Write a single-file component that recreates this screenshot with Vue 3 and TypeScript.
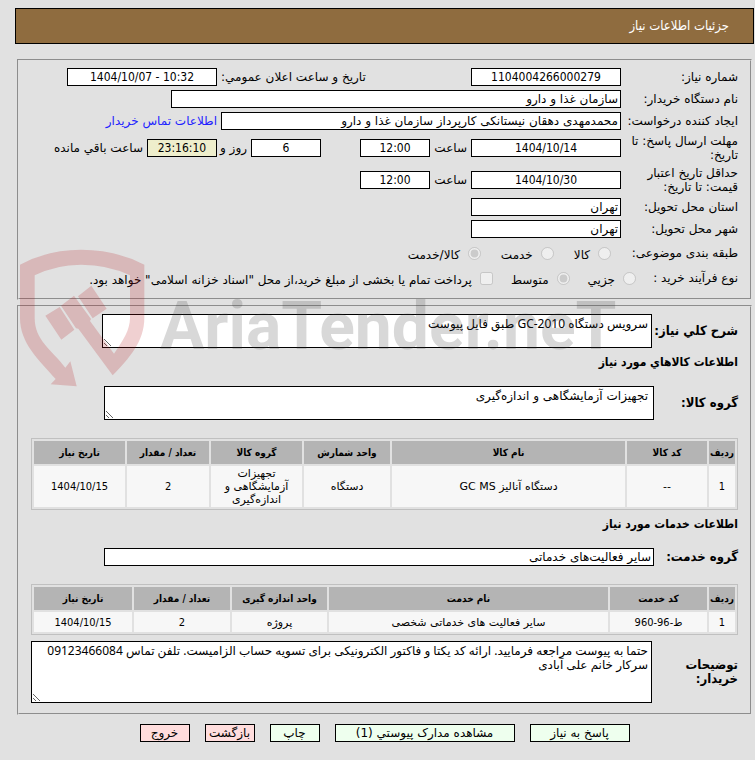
<script setup lang="ts">
interface Column {
  title: string
  width: number
}

interface ItemTable {
  columns: Column[]
  rows: string[][]
}

const goods: ItemTable = {
  columns: [
    { title: 'ردیف', width: 26 },
    { title: 'کد کالا', width: 80 },
    { title: 'نام کالا', width: 233 },
    { title: 'واحد شمارش', width: 86 },
    { title: 'گروه کالا', width: 91 },
    { title: 'تعداد / مقدار', width: 82 },
    { title: 'تاریخ نیاز', width: 91 },
  ],
  rows: [['1', '--', 'دستگاه آنالیز GC MS', 'دستگاه', 'تجهیزات آزمایشگاهی و اندازه‌گیری', '2', '1404/10/15']],
}

const services: ItemTable = {
  columns: [
    { title: 'ردیف', width: 26 },
    { title: 'کد خدمت', width: 97 },
    { title: 'نام خدمت', width: 279 },
    { title: 'واحد اندازه گیری', width: 95 },
    { title: 'تعداد / مقدار', width: 96 },
    { title: 'تاریخ نیاز', width: 98 },
  ],
  rows: [['1', 'ط-96-960', 'سایر فعالیت های خدماتی شخصی', 'پروژه', '2', '1404/10/15']],
}

const total = (t: ItemTable): number => t.columns.reduce((sum, c) => sum + c.width, 0)
const share = (t: ItemTable, c: Column): string => `${(c.width / total(t)) * 100}%`
const isNumeric = (cell: string): boolean => /\d/.test(cell)

const summary = 'سرویس دستگاه GC-2010 طبق فایل پیوست'
const goodsGroup = 'تجهیزات آزمایشگاهی و اندازه‌گیری'
const notes =
  'حتما به پیوست مراجعه فرمایید. ارائه کد یکتا و فاکتور الکترونیکی برای تسویه حساب الزامیست. تلفن تماس 09123466084\nسرکار خانم علی آبادی'
</script>

<template>
  <main class="page" dir="rtl">
    <h1 class="title">جزئیات اطلاعات نیاز</h1>

    <fieldset class="panel details">
      <div class="row">
        <label for="number">شماره نیاز:</label>
        <div class="main">
          <input id="number" class="box wide" value="1104004266000279" readonly />
          <label class="push" for="announced">تاریخ و ساعت اعلان عمومي:</label>
        </div>
        <div class="side"><input id="announced" class="box wide" value="1404/10/07 - 10:32" readonly dir="ltr" /></div>
      </div>
      <div class="row">
        <label for="org">نام دستگاه خریدار:</label>
        <div class="span inset"><input id="org" class="box text full" value="سازمان غذا و دارو" readonly /></div>
      </div>
      <div class="row">
        <label for="creator">ایجاد کننده درخواست:</label>
        <div class="main"><input id="creator" class="box text full" value="محمدمهدی دهقان نیستانکی کارپرداز سازمان غذا و دارو" readonly /></div>
        <div class="side"><a href="#contact">اطلاعات تماس خریدار</a></div>
      </div>
      <div class="row tall">
        <label for="deadline">مهلت ارسال پاسخ: تا تاریخ:</label>
        <div class="main">
          <input id="deadline" class="box wide" value="1404/10/14" readonly />
          <label class="hour" for="deadline-hour">ساعت</label>
          <input id="deadline-hour" class="box short" value="12:00" readonly />
          <input id="days" class="box short push" value="6" readonly />
          <label class="days" for="days">روز و</label>
        </div>
        <div class="side">
          <input id="remaining" class="box short timer" value="23:16:10" readonly />
          <label class="after" for="remaining">ساعت باقي مانده</label>
        </div>
      </div>
      <div class="row tall">
        <label for="valid">حداقل تاریخ اعتبار قیمت: تا تاریخ:</label>
        <div class="main">
          <input id="valid" class="box wide" value="1404/10/30" readonly />
          <label class="hour" for="valid-hour">ساعت</label>
          <input id="valid-hour" class="box short" value="12:00" readonly />
        </div>
      </div>
      <div class="row">
        <label for="province">استان محل تحویل:</label>
        <div class="main"><input id="province" class="box text wide" value="تهران" readonly /></div>
      </div>
      <div class="row">
        <label for="city">شهر محل تحویل:</label>
        <div class="main"><input id="city" class="box text wide" value="تهران" readonly /></div>
      </div>
      <div class="row choices" role="radiogroup" aria-labelledby="subject">
        <span id="subject">طبقه بندی موضوعی:</span>
        <div class="span options">
          <label><input type="radio" name="subject" disabled /><span>کالا</span></label>
          <label><input type="radio" name="subject" disabled /><span>خدمت</span></label>
          <label><input type="radio" name="subject" checked disabled /><span>کالا/خدمت</span></label>
        </div>
      </div>
      <div class="row choices process" role="group" aria-labelledby="process">
        <span id="process">نوع فرآیند خرید :</span>
        <div class="span options">
          <label><input type="radio" name="process" disabled /><span>جزيي</span></label>
          <label><input type="radio" name="process" checked disabled /><span>متوسط</span></label>
          <label><input type="checkbox" disabled /><span>پرداخت تمام یا بخشی از مبلغ خرید،از محل "اسناد خزانه اسلامی" خواهد بود.</span></label>
        </div>
      </div>
    </fieldset>

    <fieldset class="panel items">
      <div class="block">
        <label for="summary">شرح کلي نیاز:</label>
        <textarea id="summary" class="area mixed" :value="summary" readonly></textarea>
      </div>
      <h2>اطلاعات کالاهاي مورد نیاز</h2>
      <div class="block group">
        <label for="goods-group">گروه کالا:</label>
        <textarea id="goods-group" class="area" :value="goodsGroup" readonly></textarea>
      </div>
      <table>
        <colgroup>
          <col v-for="c in goods.columns" :key="c.title" :style="{ width: share(goods, c) }" />
        </colgroup>
        <thead>
          <tr><th v-for="c in goods.columns" :key="c.title" scope="col">{{ c.title }}</th></tr>
        </thead>
        <tbody>
          <tr v-for="(r, i) in goods.rows" :key="i">
            <td v-for="(cell, j) in r" :key="j" :class="{ numeric: isNumeric(cell) }">{{ cell }}</td>
          </tr>
        </tbody>
      </table>
      <h2>اطلاعات خدمات مورد نیاز</h2>
      <div class="block group">
        <label for="service-group">گروه خدمت:</label>
        <input id="service-group" class="box text" value="سایر فعالیت‌های خدماتی" readonly />
      </div>
      <table>
        <colgroup>
          <col v-for="c in services.columns" :key="c.title" :style="{ width: share(services, c) }" />
        </colgroup>
        <thead>
          <tr><th v-for="c in services.columns" :key="c.title" scope="col">{{ c.title }}</th></tr>
        </thead>
        <tbody>
          <tr v-for="(r, i) in services.rows" :key="i">
            <td v-for="(cell, j) in r" :key="j" :class="{ numeric: isNumeric(cell) }">{{ cell }}</td>
          </tr>
        </tbody>
      </table>
      <div class="block notes">
        <label for="notes">توضیحات خریدار:</label>
        <textarea id="notes" class="area mixed" :value="notes" readonly></textarea>
      </div>
    </fieldset>

    <div class="actions">
      <button type="button" class="medium">پاسخ به نیاز</button>
      <button type="button" class="large">مشاهده مدارک پیوستي (1)</button>
      <button type="button">چاپ</button>
      <button type="button" class="leave">بازگشت</button>
      <button type="button" class="leave">خروج</button>
    </div>

    <div class="watermark" dir="ltr" aria-hidden="true">
      <svg viewBox="60 28 375 414" fill="currentColor">
        <path d="M60 75Q145 30 243 30Q345 30 433 75V235C433 305 388 356 338 407L235 267L228 266L183 198L222 168L273 238L270 244L342 342C370 302 390 270 390 235V107Q325 75 243 75Q168 75 104 107V235C104 302 155 330 196 384L211 365L230 440L152 434L167 418C115 360 60 310 60 235Z" />
        <path d="M136 228L179 202L223 270L184 300ZM234 170L274 138L320 207L278 236Z" />
      </svg>
      <span>AriaTender.neT</span>
    </div>
  </main>
</template>

<style>
body {
  margin: 0;
  background: #e1e1e1;
}
</style>

<style scoped>
.page {
  --narrow: "DejaVu Sans Condensed", "DejaVu Sans", sans-serif;
  position: relative;
  padding: 8px 1px 16px 15px;
  font: 12px/14px "DejaVu Sans", sans-serif;
  color: #000;
}
.page *,
.page {
  box-sizing: border-box;
}
input,
textarea,
button {
  font: inherit;
  color: inherit;
  margin: 0;
}
.title {
  margin: 0 0 15px;
  padding: 0 24px;
  border: 1px solid #000;
  background: #8f6c3f;
  color: #fff;
  font: 13px/34px var(--narrow);
}
.panel {
  min-width: 0;
  margin: 0 2px 5px;
  border: 2px groove #e1e1e1;
}
.details {
  padding: 5px 12px 8px;
}
.items {
  padding: 7px 12px 10px;
}
.row {
  display: grid;
  grid-template-columns: 117px 1fr 186px;
  align-items: center;
  min-height: 22px;
}
.row > label {
  padding-left: 4px;
}
.row.tall {
  min-height: 32px;
}
.row.choices {
  min-height: 26px;
}
.row.process {
  grid-template-columns: 102px 1fr 186px;
  min-height: 24px;
}
.main,
.side,
.span {
  display: flex;
  align-items: center;
  min-width: 0;
  white-space: nowrap;
}
.main {
  padding-left: 4px;
}
.span {
  grid-column: 2 / 4;
}
.inset {
  padding-left: 140px;
}
.box {
  height: 18px;
  padding: 0 2px;
  border: 1px solid #000;
  border-radius: 0;
  background: #fff;
  font-family: var(--narrow);
  text-align: center;
}
.text {
  font-family: inherit;
  text-align: right;
}
.wide {
  flex: none;
  width: 150px;
}
.short {
  flex: none;
  width: 70px;
}
.full {
  width: 100%;
}
.timer {
  background: #eec;
}
.push {
  margin-right: auto;
}
.hour {
  flex: none;
  width: 41px;
  padding-right: 4px;
}
.days {
  flex: none;
  width: 30px;
  padding-right: 4px;
}
.after {
  padding-right: 4px;
}
a {
  color: #22f;
  text-decoration: none;
}
.options {
  gap: 20px;
  padding-right: 10px;
}
.process .options {
  gap: 18px;
  padding-right: 0;
}
.options label {
  display: flex;
  align-items: center;
  gap: 8px;
}
.options input {
  width: 13px;
  height: 13px;
}
.options span {
  padding-top: 4px;
}
.block {
  display: grid;
  grid-template-columns: 86px 1fr;
  align-items: center;
  padding-left: 71px;
}
.block label {
  font-family: var(--narrow);
  font-size: 13px;
  font-weight: bold;
}
.block.group {
  grid-template-columns: 84px 1fr;
  margin: 10px 0 18px;
  padding-left: 73px;
}
.block.notes {
  margin-top: 6px;
  padding-left: 0;
}
.area {
  display: block;
  width: 100%;
  height: 34px;
  padding: 2px 3px;
  border: 1px solid #000;
  border-radius: 0;
  background: #fff;
  overflow: hidden;
}
.mixed {
  font-family: "Noto Sans", "DejaVu Sans", sans-serif;
}
.group .area {
  padding-right: 5px;
}
.notes .area {
  height: 62px;
}
h2 {
  margin: 0;
  padding: 7px 0;
  font: bold 12px/14px var(--narrow);
}
table {
  width: 100%;
  table-layout: fixed;
  border: 1px solid #c0c0c0;
  border-spacing: 2px;
  font-size: 11px;
  line-height: 13px;
  text-align: center;
}
th {
  height: 23px;
  padding: 0;
  background: #b4b4b4;
  font-family: var(--narrow);
  font-size: 10px;
}
td {
  height: 20px;
  padding: 1px 10px;
  background: #f7f7f7;
}
td:first-child {
  padding: 1px;
}
.numeric {
  font-family: var(--narrow);
}
.actions {
  display: flex;
  justify-content: center;
  gap: 15px;
  margin-top: 9px;
}
button {
  width: 50px;
  height: 18px;
  padding: 0;
  border: 1px solid #000;
  background: #efe;
  white-space: nowrap;
}
.medium {
  width: 100px;
}
.large {
  width: 180px;
}
.leave {
  background: #fdd;
}
.watermark {
  position: absolute;
  top: 249px;
  left: 20px;
  display: flex;
  align-items: flex-start;
  gap: 15px;
  pointer-events: none;
  color: rgb(180 20 24 / 20%);
}
.watermark svg {
  width: 125px;
  height: 138px;
}
.watermark span {
  padding-top: 38px;
  color: rgb(60 60 60 / 20%);
  font: bold 66px/80px Roboto, sans-serif;
}
</style>
